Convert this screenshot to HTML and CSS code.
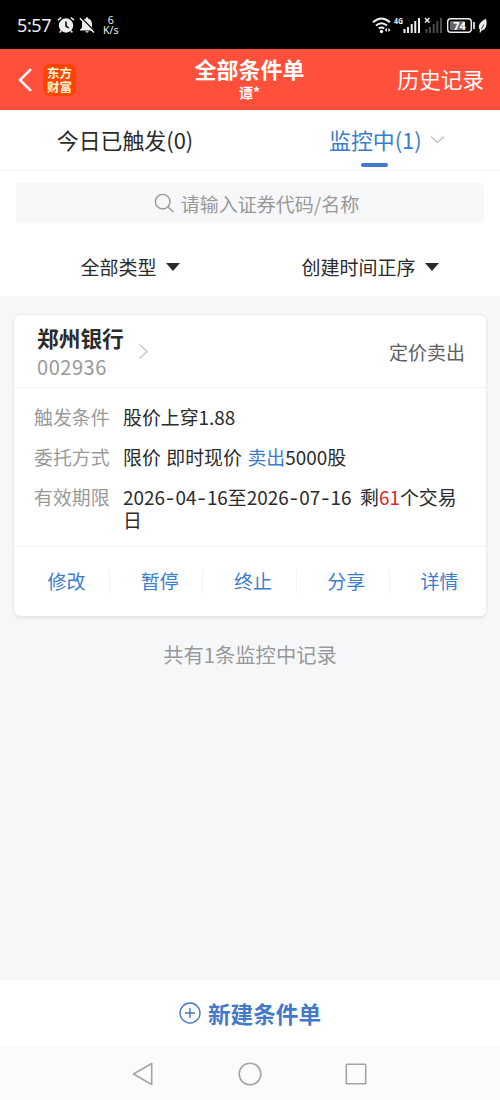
FILE: index.html
```html
<!DOCTYPE html>
<html lang="zh-CN">
<head>
<meta charset="utf-8">
<title>全部条件单</title>
<link rel="stylesheet" href="styles.css">
</head>
<body>
<div class="app">
  <div class="status">
    <span class="clock">5:57</span>
    <svg class="alarm" width="18" height="18" viewBox="0 0 18 18"><circle cx="9" cy="9.500" r="7.200" fill="#eee"/><path d="M1 4.200 4.200 1.500M17 4.200 13.800 1.500M4 14.800 2.700 16.500M14 14.800 15.300 16.500" stroke="#eee" stroke-width="1.600"/><path d="M9 5.500V10l2.800 2" fill="none" stroke="#000" stroke-width="1.500"/></svg>
    <svg class="bell" width="16" height="18" viewBox="0 0 16 18"><path d="M8 1.200c.8 0 1.100.5 1.100 1.200C11.700 3 13 5.200 13 8v3.800l2 2V14.600H1V13.800l2-2V8c0-2.800 1.300-5 3.900-5.600C6.900 1.700 7.200 1.200 8 1.200zM6.200 15.300h3.600c-.4 1.600-3.200 1.600-3.600 0z" fill="#eee"/><path d="M1.900 1.200 15.900 15.600" stroke="#000" stroke-width="1.300"/><path d="M.9 2.200 14.900 16.600" stroke="#eee" stroke-width="1.500"/></svg>
    <span class="speed"><span>6</span><span>K/s</span></span>
    <svg class="signals" width="116" height="20" viewBox="0 0 116 20">
      <g fill="none" stroke="#eee" stroke-width="2"><path d="M1 7.300Q9.500-.3 18 7.300M4 10.600Q9.500 5.800 15 10.600M6.800 13.600Q9.500 11.300 12.200 13.600"/></g>
      <circle cx="9.500" cy="16.500" r="1.700" fill="#eee"/>
      <path d="m15 13-2.300 2 2.300 2zM16.300 13l2.300 2-2.300 2z" fill="#eee"/>
      <text x="22" y="9" class="net" textLength="9" lengthAdjust="spacingAndGlyphs">4G</text>
      <path d="M31.500 14h2v4h-2zM35 12h2v6h-2zM38.700 9h2v9h-2zM42.300 6h2v12h-2zM46 3h2v15h-2z" fill="#eee"/>
      <path d="m53 3 4.500 4.500M57.500 3 53 7.500" stroke="#eee" stroke-width="1.500"/>
      <path d="M53.500 14h2v4h-2zM57 12h2v6h-2zM60.700 9h2v9h-2zM64.300 6h2v12h-2zM68 3h2v15h-2z" fill="#4b4b4b"/>
      <rect x="75.700" y="3.700" width="23.600" height="13.600" rx="3" fill="#000" stroke="#eee" stroke-width="1.400"/>
      <rect x="78" y="6" width="15" height="9" rx="1" fill="#666"/>
      <text x="87.500" y="14.800" text-anchor="middle" class="level">74</text>
      <path d="M102 7v7" stroke="#eee" stroke-width="1.700"/>
      <path d="M114 3.800c1.800 6-.2 11-4.300 11.800l-1.400 2.200-.9-.5.700-2.200c-3.300-4.500.4-8.800 5.900-11.300z" fill="#eee"/><path d="m109.500 14 2.300-4.500" stroke="#000" stroke-width=".7"/>
    </svg>
  </div>
  <header class="header">
    <div class="left">
      <svg width="16" height="26" viewBox="0 0 16 26"><path d="M14 2.200 3 13l11 10.800" fill="none" stroke="#fff" stroke-width="2.500"/></svg>
      <div class="logo"><span>东方</span><span>财富</span></div>
    </div>
    <div class="heading"><div class="title">全部条件单</div><div class="user">谭*</div></div>
    <div class="history">历史记录</div>
  </header>
  <nav class="tabs">
    <div class="tab">今日已触发(0)</div>
    <div class="tab active"><span class="tab-label">监控中(1)</span><svg width="15" height="10" viewBox="0 0 15 10"><path d="m1 1.500 6.500 6 6.500-6" fill="none" stroke="#bfc2c6" stroke-width="1.400"/></svg></div>
  </nav>
  <div class="search-area"><div class="search">
    <svg width="21" height="21" viewBox="0 0 21 21"><g fill="none" stroke="#999" stroke-width="1.400"><circle cx="8.700" cy="8.700" r="7.300"/><path d="m14 14 5.500 5"/></g></svg>
    <span>请输入证券代码/名称</span></div></div>
  <div class="filters">
    <div class="filter"><span>全部类型</span><i class="caret"></i></div>
    <div class="filter"><span>创建时间正序</span><i class="caret"></i></div>
  </div>
  <main class="content">
    <section class="card">
      <div class="card-head">
        <div><div class="stock">郑州银行</div><div class="code">002936</div></div>
        <svg class="more" width="11" height="17" viewBox="0 0 11 17"><path d="m1.500 1.500 7.500 7-7.500 7" fill="none" stroke="#c9c9c9" stroke-width="1.600"/></svg>
        <div class="kind">定价卖出</div>
      </div>
      <dl class="details">
        <dt>触发条件</dt><dd>股价上穿1.88</dd>
        <dt>委托方式</dt><dd class="order">限价 即时现价 <span class="blue">卖出</span>5000股</dd>
        <dt>有效期限</dt><dd>2026<span class="dash">-</span>04<span class="dash">-</span>16至2026<span class="dash">-</span>07<span class="dash">-</span>16&nbsp; 剩<span class="red">61</span>个交易日</dd>
      </dl>
      <div class="actions"><span>修改</span><span>暂停</span><span>终止</span><span>分享</span><span>详情</span></div>
    </section>
    <p class="summary">共有1条监控中记录</p>
  </main>
  <div class="create"><svg width="22" height="22" viewBox="0 0 22 22"><g fill="none" stroke="#4379c8" stroke-width="1.400"><circle cx="11" cy="11" r="10"/><path d="M6 11h10M11 6v10"/></g></svg><span>新建条件单</span></div>
  <div class="navbar">
    <svg width="22" height="24" viewBox="0 0 22 24"><path d="M19.700 1.500v21L1.500 12z" fill="none" stroke="#a5a5a5" stroke-width="1.600" stroke-linejoin="round"/></svg>
    <svg width="24" height="24" viewBox="0 0 24 24"><circle cx="12" cy="12" r="10.800" fill="none" stroke="#a5a5a5" stroke-width="1.600"/></svg>
    <svg width="22" height="22" viewBox="0 0 22 22"><rect x="1.300" y="1.300" width="19.400" height="19.400" rx=".8" fill="none" stroke="#a5a5a5" stroke-width="1.600"/></svg>
  </div>
</div>
</body>
</html>
```
FILE: styles.css
```css
* { box-sizing: border-box; }
body { margin: 0; font-family: "Noto Sans CJK SC", sans-serif; color: #2b2b2b; }
svg { display: block; flex: none; }
.app { width: 500px; height: 1100px; display: flex; flex-direction: column; background: #f6f7f9; overflow: hidden; }
.app > * { flex: none; }

.status { height: 49px; background: #000; color: #eee; display: flex; align-items: center; padding-left: 17px; }
.clock { font-size: 18px; line-height: 24px; width: 40px; letter-spacing: -0.4px; white-space: nowrap; font-family: "Noto Sans", sans-serif; }
.alarm { margin-right: 4px; }
.speed { display: flex; flex-direction: column; align-items: center; margin-left: 8px; font: 10.5px/10px "Noto Sans", sans-serif; }
.signals { margin-left: auto; margin-right: 12px; }
.net { font: bold 8px "Noto Sans", sans-serif; fill: #eee; }
.level { font: bold 11px "Noto Sans", sans-serif; fill: #fff; }

.header { height: 61px; background: #ff503c; color: #fff; display: grid; grid-template-columns: 1fr auto 1fr; align-items: center; padding: 0 16px 0 17px; }
.left { display: flex; align-items: center; gap: 10px; }
.logo { width: 33px; height: 32px; border-radius: 7px; background: #ff4300; color: #fff7d8; display: flex; flex-direction: column; align-items: center; justify-content: center; font-size: 12.5px; font-weight: 700; line-height: 14px; }
.heading { text-align: center; font-weight: 700; margin-left: -2px; }
.title { font-size: 22px; line-height: 26px; }
.user { font-size: 14px; line-height: 23px; }
.history { justify-self: end; font-size: 21.6px; line-height: 30px; padding-bottom: 2px; }

.tabs { height: 61px; background: #fff; display: grid; grid-template-columns: 1fr 1fr; border-bottom: 1px solid #f4f4f4; font-size: 21.9px; line-height: 60px; }
.tab { text-align: center; white-space: nowrap; }
.active { color: #3b7dcd; display: flex; align-items: center; padding-left: 79px; gap: 8px; }
.tab-label { position: relative; }
.tab-label::after { content: ""; position: absolute; left: 50%; bottom: 3px; width: 27px; height: 4px; margin-left: -14px; border-radius: 2px; background: #3b7dcd; }

.search-area { background: #fff; padding: 12px 16px 0; }
.search { height: 40px; border-radius: 3px; background: #f6f7f9; color: #999; display: flex; justify-content: center; align-items: center; gap: 6px; font-size: 19px; padding-left: 13px; }
.filters { height: 73px; background: #fff; display: grid; grid-template-columns: 260px 220px; font-size: 19px; padding-top: 14px; }
.filter { display: flex; align-items: center; justify-content: center; gap: 9px; }
.caret { border: 7px solid transparent; border-top: 8px solid #2b2b2b; border-bottom: 0; }

.content { height: 684px; padding: 19px 14px 0; }
.card { height: 301px; background: #fff; border-radius: 6px; box-shadow: 0 0 1px 1px #e9ebee, 0 2px 3px #dddfe2; }
.card-head { height: 73px; border-bottom: 1px solid #f3f3f3; display: flex; align-items: center; padding: 0 21px 0 23px; }
.stock { font-size: 21.7px; line-height: 29px; font-weight: 700; }
.code { font-size: 20px; line-height: 27px; color: #999; letter-spacing: .55px; padding-top: 1px; }
.more { margin-left: 14px; }
.kind { margin-left: auto; font-size: 19px; color: #606060; }
.details { margin: 0; height: 159px; padding: 18px 16px 0 20px; border-bottom: 1px solid #f3f3f3; display: grid; grid-template-columns: 89px 336px; row-gap: 18px; align-content: start; font-size: 18.9px; line-height: 22.200px; }
.details dt { color: #999; }
.details dd { margin: 0; word-break: break-all; }
.order { word-spacing: 1.3px; }
.dash { font-family: Inter, sans-serif; line-height: 1; padding: 0 .9px; }
.blue { color: #3b7dcd; }
.red { color: #e02328; }
.actions { height: 68px; padding-left: 6px; display: grid; grid-template-columns: repeat(5, 1fr); align-items: center; text-align: center; color: #3b7dcd; font-size: 19px; line-height: 24px; }
.actions span { background: linear-gradient(#f3f3f3, #f3f3f3) calc(100% - 3px) 0 / 1px 100% no-repeat; }
.actions span:last-child { background: none; }
.summary { margin: 23px 0 0; text-align: center; color: #999; font-size: 20.300px; line-height: 30px; }

.create { height: 66px; background: #fff; color: #4379c8; display: flex; align-items: center; justify-content: center; gap: 7px; font-size: 22.600px; font-weight: 700; }
.navbar { height: 54px; background: #fbfbfb; display: flex; justify-content: space-between; align-items: center; padding: 2px 133px 0 132px; }
```
